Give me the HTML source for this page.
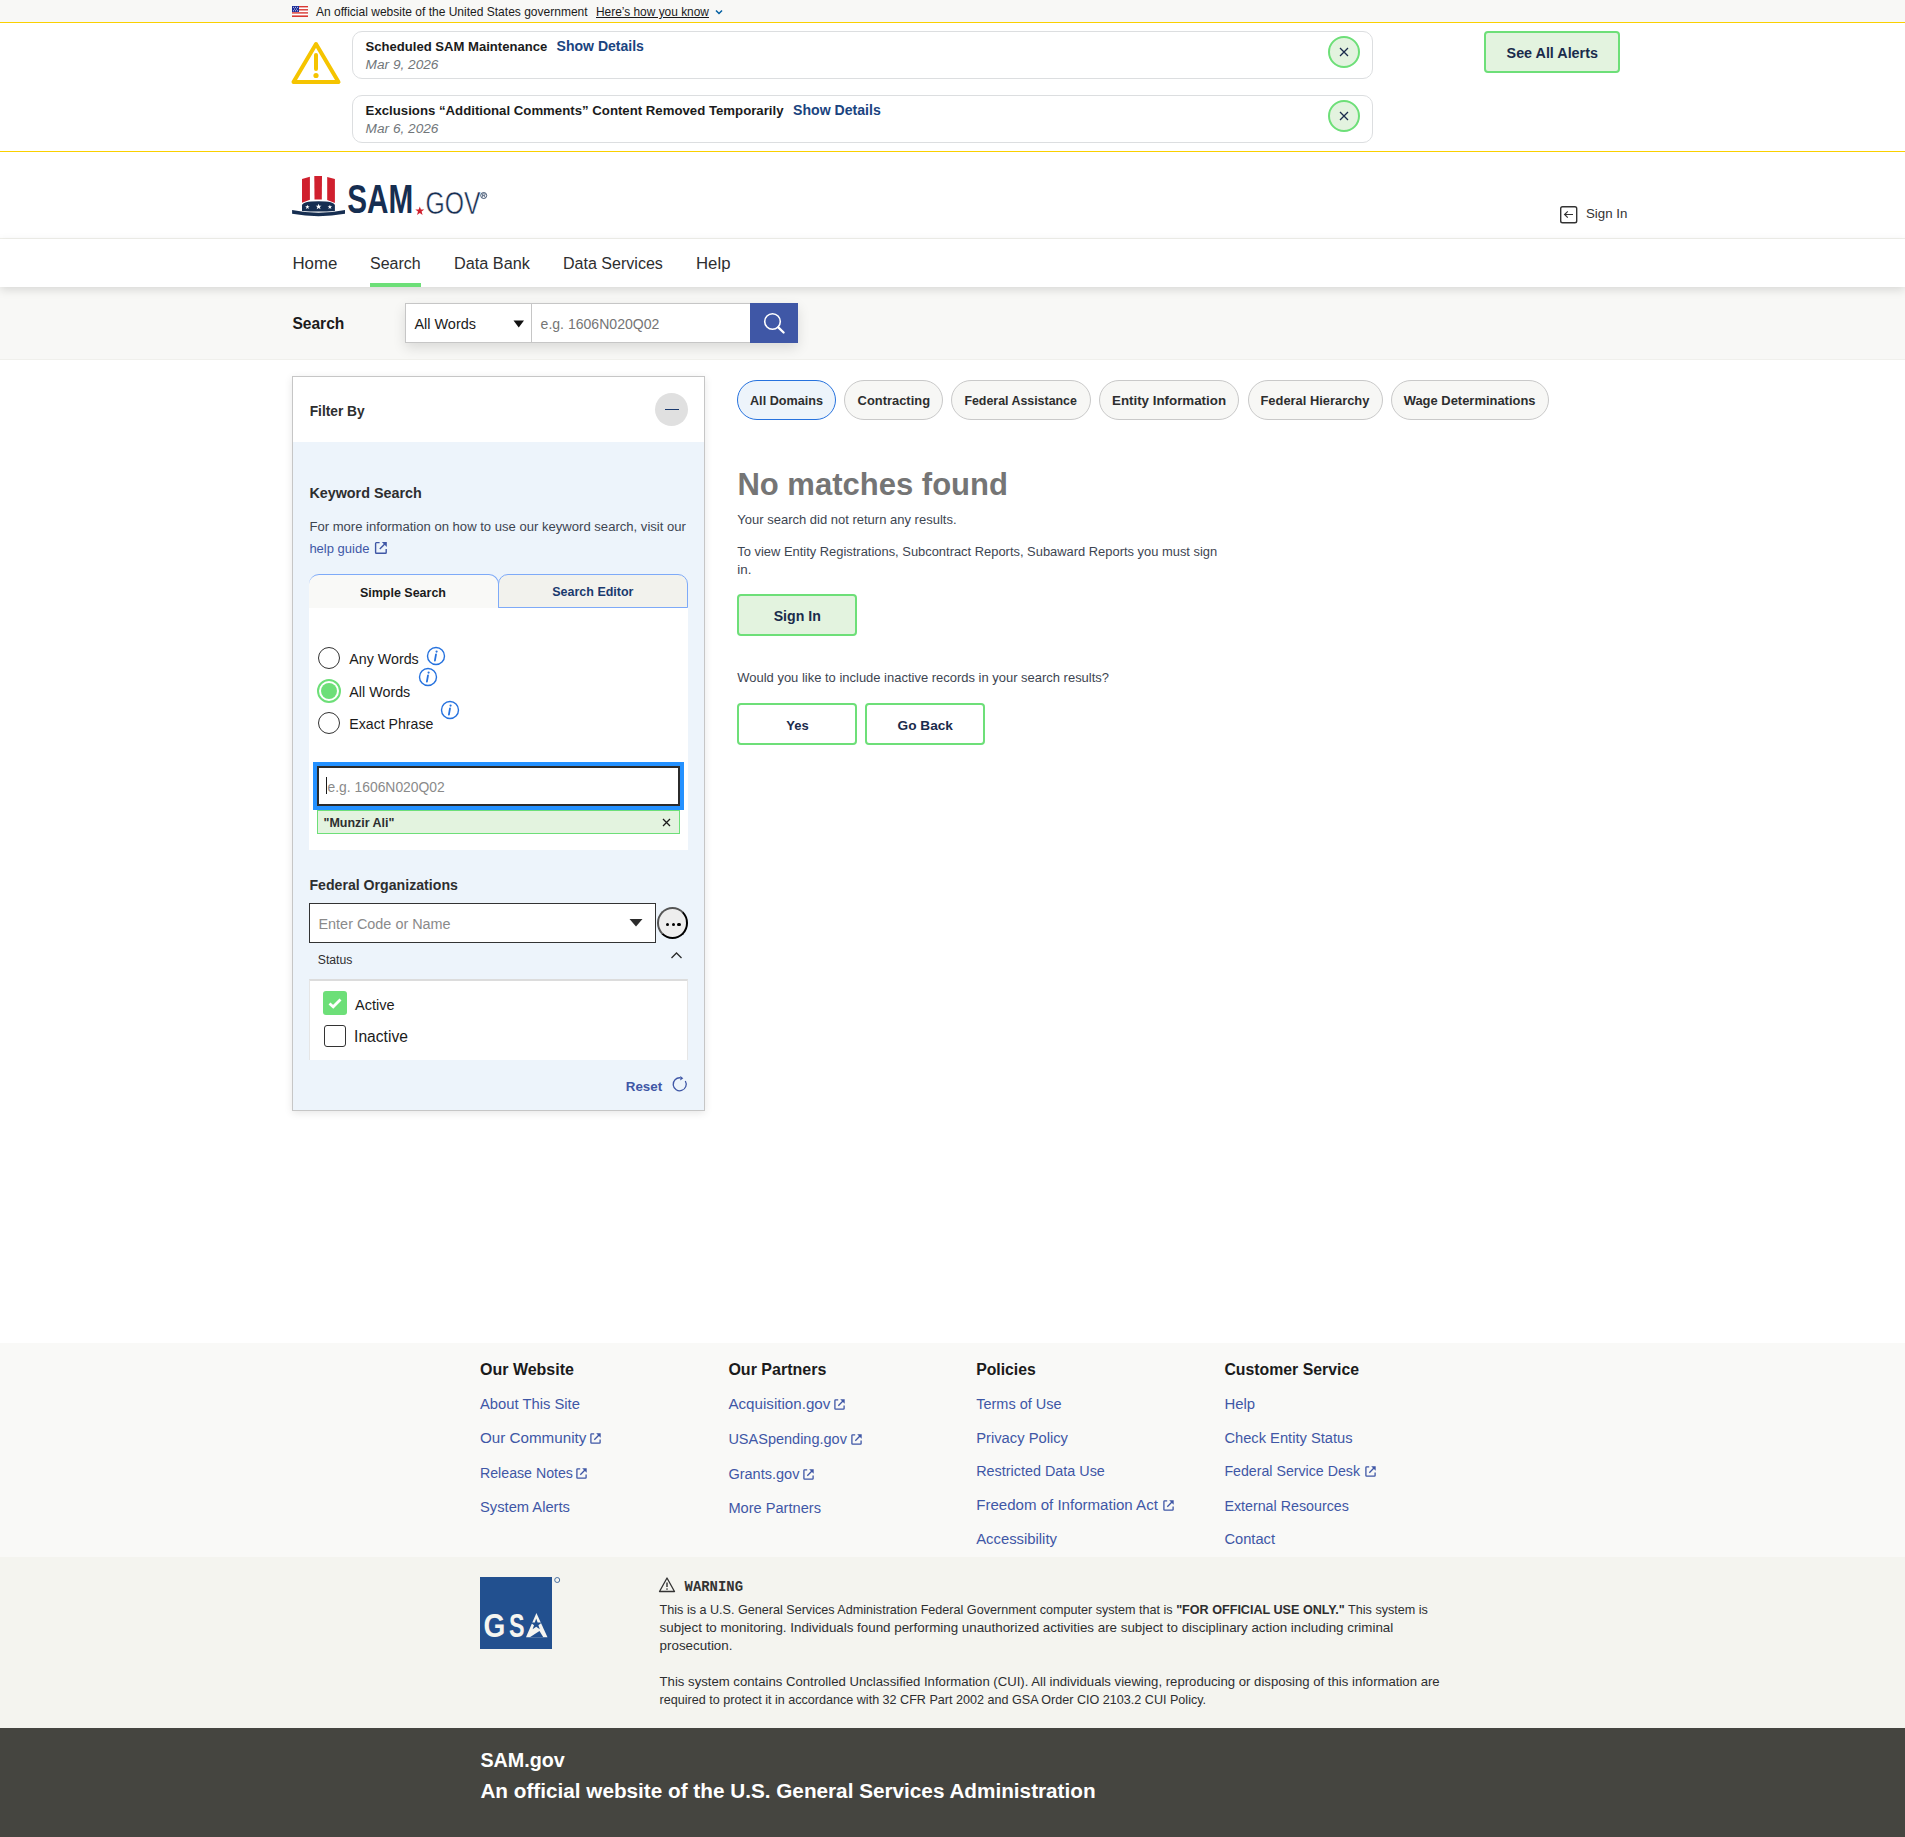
<!DOCTYPE html>
<html><head><meta charset="utf-8"><title>SAM.gov | Search</title>
<style>
html,body{margin:0;padding:0}
body{width:1905px;height:1837px;position:relative;overflow:hidden;background:#fff;font-family:"Liberation Sans",sans-serif;}
.a{position:absolute}
.t{position:absolute;white-space:nowrap;line-height:1}
</style></head><body>
<div class="a" style="left:0px;top:0px;width:1905px;height:22px;background:#f8f8f6"></div>
<div class="a" style="left:0px;top:22px;width:1905px;height:1px;background:#fad000"></div>
<svg class="a" style="left:292px;top:6px" width="16" height="11" viewBox="0 0 16 11">
<rect width="16" height="11" fill="#fff"/>
<g fill="#d83933"><rect y="0" width="16" height="1.4"/><rect y="3.1" width="16" height="1.4"/><rect y="6.2" width="16" height="1.4"/><rect y="9.4" width="16" height="1.6"/></g>
<rect width="7" height="6" fill="#1f2f9a"/>
<g fill="#fff"><circle cx="1.5" cy="1.2" r=".5"/><circle cx="3.5" cy="1.2" r=".5"/><circle cx="5.5" cy="1.2" r=".5"/><circle cx="2.5" cy="3" r=".5"/><circle cx="4.5" cy="3" r=".5"/><circle cx="1.5" cy="4.8" r=".5"/><circle cx="3.5" cy="4.8" r=".5"/><circle cx="5.5" cy="4.8" r=".5"/></g></svg>
<div class="t" style="left:316.00px;top:6.00px;font-size:12.03px;font-weight:normal;font-style:normal;font-family:'Liberation Sans', sans-serif;color:#1b1b1b;">An official website of the United States government</div>
<div class="t" style="left:596.00px;top:7.00px;font-size:11.91px;font-weight:normal;font-style:normal;font-family:'Liberation Sans', sans-serif;color:#1b1b1b;text-decoration:underline;text-underline-offset:1px;">Here’s how you know</div>
<svg class="a" style="left:714px;top:8px" width="10" height="8" viewBox="0 0 10 8"><path d="M2 2.5 L5 5.5 L8 2.5" fill="none" stroke="#005ea2" stroke-width="1.5"/></svg>
<div class="a" style="left:0px;top:151px;width:1905px;height:1px;background:#fad000"></div>
<svg class="a" style="left:290px;top:40px" width="52" height="46" viewBox="0 0 52 46">
<path d="M26 4 L48.5 42 L3.5 42 Z" fill="none" stroke="#f5c400" stroke-width="4" stroke-linejoin="round"/>
<path d="M26 15 L26 29" stroke="#f5c400" stroke-width="4" stroke-linecap="round"/>
<circle cx="26" cy="35.5" r="2.6" fill="#f5c400"/></svg>
<div class="a" style="left:352px;top:31px;width:1021px;height:48px;border:1px solid #dcdee0;border-radius:10px;box-sizing:border-box;background:#fff"></div>
<div class="t" style="left:365.60px;top:40.00px;font-size:13.09px;font-weight:bold;font-style:normal;font-family:'Liberation Sans', sans-serif;color:#1b1b1b;">Scheduled SAM Maintenance</div>
<div class="t" style="left:556.60px;top:39.00px;font-size:14.04px;font-weight:bold;font-style:normal;font-family:'Liberation Sans', sans-serif;color:#1a4480;">Show Details</div>
<div class="t" style="left:365.60px;top:58.00px;font-size:13.67px;font-weight:normal;font-style:italic;font-family:'Liberation Sans', sans-serif;color:#71767a;">Mar 9, 2026</div>
<div class="a" style="left:1328px;top:36px;width:32px;height:32px;border-radius:50%;border:2px solid #6ddf78;background:#e3f3df;box-sizing:border-box"></div>
<svg class="a" style="left:1337px;top:45px" width="14" height="14" viewBox="0 0 14 14"><path d="M3 3 L11 11 M11 3 L3 11" stroke="#1a2b4c" stroke-width="1.3"/></svg>
<div class="a" style="left:352px;top:95px;width:1021px;height:48px;border:1px solid #dcdee0;border-radius:10px;box-sizing:border-box;background:#fff"></div>
<div class="t" style="left:365.60px;top:104.00px;font-size:13.21px;font-weight:bold;font-style:normal;font-family:'Liberation Sans', sans-serif;color:#1b1b1b;">Exclusions “Additional Comments” Content Removed Temporarily</div>
<div class="t" style="left:793.00px;top:103.00px;font-size:14.11px;font-weight:bold;font-style:normal;font-family:'Liberation Sans', sans-serif;color:#1a4480;">Show Details</div>
<div class="t" style="left:365.60px;top:122.00px;font-size:13.67px;font-weight:normal;font-style:italic;font-family:'Liberation Sans', sans-serif;color:#71767a;">Mar 6, 2026</div>
<div class="a" style="left:1328px;top:100px;width:32px;height:32px;border-radius:50%;border:2px solid #6ddf78;background:#e3f3df;box-sizing:border-box"></div>
<svg class="a" style="left:1337px;top:109px" width="14" height="14" viewBox="0 0 14 14"><path d="M3 3 L11 11 M11 3 L3 11" stroke="#1a2b4c" stroke-width="1.3"/></svg>
<div class="a" style="left:1484px;top:31px;width:136px;height:42px;border:2px solid #6ddf78;background:#e3f3df;border-radius:4px;box-sizing:border-box"></div>
<div class="t" style="left:1506.60px;top:46.00px;font-size:14.34px;font-weight:bold;font-style:normal;font-family:'Liberation Sans', sans-serif;color:#1a2b4c;">See All Alerts</div>
<div class="a" style="left:0px;top:238px;width:1905px;height:1px;background:#f1f1ec"></div>
<svg class="a" style="left:290px;top:174px" width="200" height="44" viewBox="0 0 200 44">
<g fill="#d0202e"><path d="M12 5.1 L19.9 2.8 L19.9 25.8 L12 28.8 Z"/><path d="M24.3 2 L32 2 L31.8 25.6 L24.5 25.6 Z"/><path d="M37.2 2.9 L44.9 5.1 L44.9 28.9 L37.2 25.9 Z"/></g>
<path d="M12 36.9 L12 31.5 Q12 27.2 28.5 27.2 Q44.9 27.2 44.9 31.5 L44.9 36.9 Q28.5 38 12 36.9 Z" fill="#162e51"/>
<g fill="#fff"><path d="M17.4 30.7 L18 32.3 L19.7 32.3 L18.3 33.3 L18.9 35 L17.4 33.9 L15.9 35 L16.5 33.3 L15.1 32.3 L16.8 32.3 Z"/><path d="M28.6 29.8 L29.35 31.8 L31.5 31.8 L29.8 33.1 L30.5 35.3 L28.6 33.9 L26.7 35.3 L27.4 33.1 L25.7 31.8 L27.85 31.8 Z"/><path d="M39.9 30.7 L40.5 32.3 L42.2 32.3 L40.8 33.3 L41.4 35 L39.9 33.9 L38.4 35 L39 33.3 L37.6 32.3 L39.3 32.3 Z"/></g>
<path d="M2.1 36 Q28.5 41.5 55 36 L55 39.8 Q28.5 44.5 2.1 39.8 Z" fill="#162e51"/>
<text x="57.3" y="39" font-family="Liberation Sans" font-weight="bold" font-size="40.7" fill="#162e51" textLength="66" lengthAdjust="spacingAndGlyphs">SAM</text>
<path d="M129.8 32.4 L130.9 35.6 L134.3 35.6 L131.6 37.6 L132.6 40.9 L129.8 38.9 L127 40.9 L128 37.6 L125.3 35.6 L128.7 35.6 Z" fill="#d0202e"/>
<text x="135.4" y="39.6" font-family="Liberation Sans" font-size="31.7" fill="#162e51" stroke="#fff" stroke-width="0.5" textLength="55" lengthAdjust="spacingAndGlyphs">GOV</text>
<circle cx="193.7" cy="21.5" r="3" fill="none" stroke="#162e51" stroke-width=".8"/><path d="M192.6 23.3 L192.6 19.8 L194.1 19.8 Q195.1 19.8 195.1 20.7 Q195.1 21.6 194.1 21.6 L192.6 21.6 M194 21.6 L195.1 23.3" fill="none" stroke="#162e51" stroke-width=".6"/>
</svg>
<svg class="a" style="left:1559px;top:205px" width="20" height="20" viewBox="0 0 20 20">
<rect x="1.7" y="1.7" width="16" height="16" rx="1.8" fill="none" stroke="#333" stroke-width="1.4"/>
<path d="M14 9.5 L5.6 9.5 M8.8 6.4 L5.6 9.5 L8.8 12.6" fill="none" stroke="#333" stroke-width="1.2"/></svg>
<div class="t" style="left:1586.00px;top:207.00px;font-size:13.29px;font-weight:normal;font-style:normal;font-family:'Liberation Sans', sans-serif;color:#333;">Sign In</div>
<div class="a" style="left:0px;top:287px;width:1905px;height:73px;background:#f8f8f6;border-bottom:1px solid #f0f0ec;box-sizing:border-box"></div>
<div class="a" style="left:0px;top:239px;width:1905px;height:48px;background:#fff;box-shadow:0 3px 9px rgba(0,0,0,.13)"></div>
<div class="t" style="left:292.40px;top:256.00px;font-size:16.85px;font-weight:normal;font-style:normal;font-family:'Liberation Sans', sans-serif;color:#2d2e2f;">Home</div>
<div class="t" style="left:370.00px;top:256.00px;font-size:15.97px;font-weight:normal;font-style:normal;font-family:'Liberation Sans', sans-serif;color:#2d2e2f;">Search</div>
<div class="t" style="left:454.00px;top:255.00px;font-size:16.26px;font-weight:normal;font-style:normal;font-family:'Liberation Sans', sans-serif;color:#2d2e2f;">Data Bank</div>
<div class="t" style="left:563.00px;top:255.00px;font-size:16.06px;font-weight:normal;font-style:normal;font-family:'Liberation Sans', sans-serif;color:#2d2e2f;">Data Services</div>
<div class="t" style="left:696.00px;top:256.00px;font-size:16.75px;font-weight:normal;font-style:normal;font-family:'Liberation Sans', sans-serif;color:#2d2e2f;">Help</div>
<div class="a" style="left:370px;top:283px;width:51px;height:4px;background:#6ddf78"></div>
<div class="t" style="left:292.40px;top:316.00px;font-size:15.59px;font-weight:bold;font-style:normal;font-family:'Liberation Sans', sans-serif;color:#1b1b1b;">Search</div>
<div class="a" style="left:405px;top:303px;width:393px;height:40px;box-shadow:0 5px 12px rgba(0,0,0,.12)"></div>
<div class="a" style="left:405px;top:303px;width:127px;height:40px;background:#fff;border:1px solid #c6c6c6;box-sizing:border-box"></div>
<div class="t" style="left:414.40px;top:317.00px;font-size:14.46px;font-weight:normal;font-style:normal;font-family:'Liberation Sans', sans-serif;color:#1b1b1b;">All Words</div>
<svg class="a" style="left:513px;top:320px" width="12" height="8" viewBox="0 0 12 8"><path d="M0.5 0.5 L11 0.5 L5.75 7.5 Z" fill="#111"/></svg>
<div class="a" style="left:531px;top:303px;width:220px;height:40px;background:#fff;border:1px solid #c6c6c6;box-sizing:border-box"></div>
<div class="t" style="left:540.60px;top:317.00px;font-size:14.06px;font-weight:normal;font-style:normal;font-family:'Liberation Sans', sans-serif;color:#757575;">e.g. 1606N020Q02</div>
<div class="a" style="left:750px;top:303px;width:48px;height:40px;background:#3f57a6"></div>
<svg class="a" style="left:762px;top:311px" width="26" height="26" viewBox="0 0 26 26"><circle cx="10.5" cy="10.5" r="7.8" fill="none" stroke="#fff" stroke-width="1.6"/><path d="M16.3 16.4 L21.6 21.5" stroke="#fff" stroke-width="2.3" stroke-linecap="round"/></svg>
<div class="a" style="left:292px;top:376px;width:413px;height:735px;border:1px solid #c6c6c6;box-sizing:border-box;background:#edf4fb;box-shadow:0 2px 8px rgba(0,0,0,.10)"></div>
<div class="a" style="left:293px;top:377px;width:411px;height:65px;background:#fff"></div>
<div class="t" style="left:309.70px;top:405.00px;font-size:13.75px;font-weight:bold;font-style:normal;font-family:'Liberation Sans', sans-serif;color:#2d2e2f;">Filter By</div>
<div class="a" style="left:655px;top:393px;width:33px;height:33px;background:#e0e0e0;border-radius:50%"></div>
<div class="a" style="left:665px;top:408.7px;width:14px;height:1.7px;background:#1a3a6e"></div>
<div class="t" style="left:309.40px;top:486.00px;font-size:14.35px;font-weight:bold;font-style:normal;font-family:'Liberation Sans', sans-serif;color:#2d2e2f;">Keyword Search</div>
<div class="t" style="left:309.40px;top:520.00px;font-size:13.09px;font-weight:normal;font-style:normal;font-family:'Liberation Sans', sans-serif;color:#3d4551;">For more information on how to use our keyword search, visit our</div>
<div class="t" style="left:309.40px;top:542.00px;font-size:13.00px;font-weight:normal;font-style:normal;font-family:'Liberation Sans', sans-serif;color:#3f57a6;">help guide</div>
<svg class="a" style="left:374px;top:541px" width="14" height="14" viewBox="0 0 14 14"><path d="M5.6 1.6 L2.4 1.6 Q1.6 1.6 1.6 2.4 L1.6 11.4 Q1.6 12.2 2.4 12.2 L11.4 12.2 Q12.2 12.2 12.2 11.4 L12.2 8" fill="none" stroke="#3f57a6" stroke-width="1.4"/><path d="M5.8 8 L11.2 2.6" fill="none" stroke="#3f57a6" stroke-width="1.4"/><path d="M7.8 1 L12.8 1 L12.8 6 Z" fill="#3f57a6"/></svg>
<div class="a" style="left:309px;top:574px;width:190px;height:34px;background:#f9f9f7;border-top:1px solid #7eaaf8;border-right:1px solid #7eaaf8;border-radius:10px 10px 0 0;box-sizing:border-box"></div>
<div class="a" style="left:498px;top:574px;width:190px;height:34px;background:#f2f2ed;border:1px solid #7eaaf8;border-radius:10px 10px 0 0;box-sizing:border-box"></div>
<div class="t" style="left:360.00px;top:587.00px;font-size:12.48px;font-weight:bold;font-style:normal;font-family:'Liberation Sans', sans-serif;color:#1b1b1b;">Simple Search</div>
<div class="t" style="left:552.30px;top:586.00px;font-size:12.49px;font-weight:bold;font-style:normal;font-family:'Liberation Sans', sans-serif;color:#1a3a6e;">Search Editor</div>
<div class="a" style="left:309px;top:608px;width:379px;height:242px;background:#fff"></div>
<div class="a" style="left:318px;top:647px;width:22px;height:22px;border-radius:50%;border:1.5px solid #333;box-sizing:border-box;background:#fff"></div>
<div class="t" style="left:349.30px;top:652.00px;font-size:14.25px;font-weight:normal;font-style:normal;font-family:'Liberation Sans', sans-serif;color:#1b1b1b;">Any Words</div>
<div class="a" style="left:317px;top:679px;width:24px;height:24px;border-radius:50%;border:2.5px solid #6ddf78;box-sizing:border-box;background:#fff"></div>
<div class="a" style="left:321px;top:683px;width:16px;height:16px;border-radius:50%;background:#6ddf78"></div>
<div class="t" style="left:349.30px;top:685.00px;font-size:14.32px;font-weight:normal;font-style:normal;font-family:'Liberation Sans', sans-serif;color:#1b1b1b;">All Words</div>
<div class="a" style="left:318px;top:712px;width:22px;height:22px;border-radius:50%;border:1.5px solid #333;box-sizing:border-box;background:#fff"></div>
<div class="t" style="left:349.30px;top:717.00px;font-size:14.13px;font-weight:normal;font-style:normal;font-family:'Liberation Sans', sans-serif;color:#1b1b1b;">Exact Phrase</div>
<svg class="a" style="left:426.2px;top:646px" width="20" height="20" viewBox="0 0 20 20"><circle cx="10" cy="10" r="8.5" fill="none" stroke="#2672de" stroke-width="1.4"/><circle cx="10.6" cy="5.6" r="1.1" fill="#2672de"/><path d="M10 8.3 L8.9 14.6" stroke="#2672de" stroke-width="1.8" stroke-linecap="round"/></svg>
<svg class="a" style="left:418px;top:667px" width="20" height="20" viewBox="0 0 20 20"><circle cx="10" cy="10" r="8.5" fill="none" stroke="#2672de" stroke-width="1.4"/><circle cx="10.6" cy="5.6" r="1.1" fill="#2672de"/><path d="M10 8.3 L8.9 14.6" stroke="#2672de" stroke-width="1.8" stroke-linecap="round"/></svg>
<svg class="a" style="left:440px;top:700px" width="20" height="20" viewBox="0 0 20 20"><circle cx="10" cy="10" r="8.5" fill="none" stroke="#2672de" stroke-width="1.4"/><circle cx="10.6" cy="5.6" r="1.1" fill="#2672de"/><path d="M10 8.3 L8.9 14.6" stroke="#2672de" stroke-width="1.8" stroke-linecap="round"/></svg>
<div class="a" style="left:313px;top:762px;width:371px;height:48px;background:#2491ff"></div>
<div class="a" style="left:317px;top:766px;width:363px;height:40px;background:#fff;border:2px solid #2b2b2b;box-sizing:border-box"></div>
<div class="a" style="left:326px;top:777px;width:1px;height:17px;background:#1b1b1b"></div>
<div class="t" style="left:327.50px;top:781.00px;font-size:13.89px;font-weight:normal;font-style:normal;font-family:'Liberation Sans', sans-serif;color:#8a8a8a;">e.g. 1606N020Q02</div>
<div class="a" style="left:317px;top:810px;width:363px;height:24px;background:#e3f3df;border:1px solid #6ddf78;box-sizing:border-box"></div>
<div class="t" style="left:323.50px;top:817.00px;font-size:12.48px;font-weight:bold;font-style:normal;font-family:'Liberation Sans', sans-serif;color:#2d2e2f;">&quot;Munzir Ali&quot;</div>
<svg class="a" style="left:661px;top:817px" width="11" height="11" viewBox="0 0 11 11"><path d="M2 2 L9 9 M9 2 L2 9" stroke="#1b1b1b" stroke-width="1.3"/></svg>
<div class="t" style="left:309.40px;top:878.00px;font-size:14.15px;font-weight:bold;font-style:normal;font-family:'Liberation Sans', sans-serif;color:#2d2e2f;">Federal Organizations</div>
<div class="a" style="left:309px;top:903px;width:347px;height:40px;background:#fff;border:1px solid #333;box-sizing:border-box"></div>
<div class="t" style="left:318.50px;top:917.00px;font-size:14.42px;font-weight:normal;font-style:normal;font-family:'Liberation Sans', sans-serif;color:#8a8a8a;">Enter Code or Name</div>
<svg class="a" style="left:629px;top:918px" width="14" height="10" viewBox="0 0 14 10"><path d="M0.5 1 L13.5 1 L7 8.5 Z" fill="#2b2b2b"/></svg>
<div class="a" style="left:657px;top:907px;width:31px;height:32px;background:#eeeeee;border:2px solid #000;border-color:#555 #000 #000 #555;border-radius:50%;box-sizing:border-box"></div>
<div class="a" style="left:665.75px;top:922.5px;width:3.5px;height:3.5px;background:#000;border-radius:50%"></div>
<div class="a" style="left:671.55px;top:922.5px;width:3.5px;height:3.5px;background:#000;border-radius:50%"></div>
<div class="a" style="left:677.35px;top:922.5px;width:3.5px;height:3.5px;background:#000;border-radius:50%"></div>
<div class="t" style="left:317.80px;top:954.00px;font-size:12.21px;font-weight:normal;font-style:normal;font-family:'Liberation Sans', sans-serif;color:#2d2e2f;">Status</div>
<svg class="a" style="left:670px;top:950px" width="13" height="10" viewBox="0 0 13 10"><path d="M1.5 8 L6.5 3 L11.5 8" fill="none" stroke="#2b2b2b" stroke-width="1.3"/></svg>
<div class="a" style="left:309px;top:979px;width:379px;height:81px;background:#fff;border-top:2px solid #dcdcdc;border-left:1px solid #e6e6e6;border-right:1px solid #e6e6e6;box-sizing:border-box"></div>
<div class="a" style="left:323px;top:991px;width:24px;height:24px;background:#6ddf78;border-radius:3px"></div>
<svg class="a" style="left:323px;top:991px" width="24" height="24" viewBox="0 0 24 24"><path d="M6.5 12.5 L10.2 15.8 L17.5 8.5" fill="none" stroke="#fff" stroke-width="2.8"/></svg>
<div class="t" style="left:355.10px;top:998.00px;font-size:14.54px;font-weight:normal;font-style:normal;font-family:'Liberation Sans', sans-serif;color:#1b1b1b;">Active</div>
<div class="a" style="left:324px;top:1025px;width:22px;height:22px;background:#fff;border:1.5px solid #333;border-radius:3px;box-sizing:border-box"></div>
<div class="t" style="left:354.07px;top:1029.00px;font-size:15.63px;font-weight:normal;font-style:normal;font-family:'Liberation Sans', sans-serif;color:#1b1b1b;">Inactive</div>
<div class="t" style="left:625.80px;top:1080.00px;font-size:13.36px;font-weight:bold;font-style:normal;font-family:'Liberation Sans', sans-serif;color:#3f57a6;">Reset</div>
<svg class="a" style="left:670px;top:1075px" width="18" height="18" viewBox="0 0 18 18"><path d="M15.33 6.05 A6.5 6.5 0 1 1 10.3 2.8" fill="none" stroke="#3f57a6" stroke-width="1.3"/><path d="M10.3 1.1 L13.3 3.3 L10.3 5.5 Z" fill="#3f57a6"/></svg>
<div class="a" style="left:737px;top:380px;width:99px;height:40px;background:#edf4fb;border:1.5px solid #2672de;border-radius:20px;box-sizing:border-box"></div>
<div class="t" style="left:750.00px;top:395.00px;font-size:12.63px;font-weight:bold;font-style:normal;font-family:'Liberation Sans', sans-serif;color:#2d2e2f;">All Domains</div>
<div class="a" style="left:844px;top:380px;width:99px;height:40px;background:#f7f7f5;border:1px solid #c9c9c9;border-radius:20px;box-sizing:border-box"></div>
<div class="t" style="left:857.60px;top:395.00px;font-size:12.91px;font-weight:bold;font-style:normal;font-family:'Liberation Sans', sans-serif;color:#2d2e2f;">Contracting</div>
<div class="a" style="left:951px;top:380px;width:140px;height:40px;background:#f7f7f5;border:1px solid #c9c9c9;border-radius:20px;box-sizing:border-box"></div>
<div class="t" style="left:964.40px;top:395.00px;font-size:12.40px;font-weight:bold;font-style:normal;font-family:'Liberation Sans', sans-serif;color:#2d2e2f;">Federal Assistance</div>
<div class="a" style="left:1099px;top:380px;width:140px;height:40px;background:#f7f7f5;border:1px solid #c9c9c9;border-radius:20px;box-sizing:border-box"></div>
<div class="t" style="left:1112.00px;top:394.00px;font-size:13.33px;font-weight:bold;font-style:normal;font-family:'Liberation Sans', sans-serif;color:#2d2e2f;">Entity Information</div>
<div class="a" style="left:1247.5px;top:380px;width:135px;height:40px;background:#f7f7f5;border:1px solid #c9c9c9;border-radius:20px;box-sizing:border-box"></div>
<div class="t" style="left:1260.50px;top:395.00px;font-size:12.90px;font-weight:bold;font-style:normal;font-family:'Liberation Sans', sans-serif;color:#2d2e2f;">Federal Hierarchy</div>
<div class="a" style="left:1391px;top:380px;width:158px;height:40px;background:#f7f7f5;border:1px solid #c9c9c9;border-radius:20px;box-sizing:border-box"></div>
<div class="t" style="left:1403.70px;top:395.00px;font-size:12.94px;font-weight:bold;font-style:normal;font-family:'Liberation Sans', sans-serif;color:#2d2e2f;">Wage Determinations</div>
<div class="t" style="left:737.39px;top:469.00px;font-size:31.02px;font-weight:bold;font-style:normal;font-family:'Liberation Sans', sans-serif;color:#757575;">No matches found</div>
<div class="t" style="left:737.30px;top:513.00px;font-size:13.01px;font-weight:normal;font-style:normal;font-family:'Liberation Sans', sans-serif;color:#3d4551;">Your search did not return any results.</div>
<div class="t" style="left:737.30px;top:546.00px;font-size:12.92px;font-weight:normal;font-style:normal;font-family:'Liberation Sans', sans-serif;color:#3d4551;">To view Entity Registrations, Subcontract Reports, Subaward Reports you must sign</div>
<div class="t" style="left:737.30px;top:563.00px;font-size:13.39px;font-weight:normal;font-style:normal;font-family:'Liberation Sans', sans-serif;color:#3d4551;">in.</div>
<div class="a" style="left:737px;top:594px;width:120px;height:42px;background:#e3f3df;border:2px solid #6ddf78;border-radius:4px;box-sizing:border-box"></div>
<div class="t" style="left:773.70px;top:609.00px;font-size:14.15px;font-weight:bold;font-style:normal;font-family:'Liberation Sans', sans-serif;color:#1a2b4c;">Sign In</div>
<div class="t" style="left:737.30px;top:672.00px;font-size:12.97px;font-weight:normal;font-style:normal;font-family:'Liberation Sans', sans-serif;color:#3d4551;">Would you like to include inactive records in your search results?</div>
<div class="a" style="left:737px;top:703px;width:120px;height:42px;background:#fff;border:2px solid #6ddf78;border-radius:4px;box-sizing:border-box"></div>
<div class="t" style="left:786.30px;top:719.00px;font-size:13.00px;font-weight:bold;font-style:normal;font-family:'Liberation Sans', sans-serif;color:#1a2b4c;">Yes</div>
<div class="a" style="left:865px;top:703px;width:120px;height:42px;background:#fff;border:2px solid #6ddf78;border-radius:4px;box-sizing:border-box"></div>
<div class="t" style="left:897.60px;top:719.00px;font-size:13.65px;font-weight:bold;font-style:normal;font-family:'Liberation Sans', sans-serif;color:#1a2b4c;">Go Back</div>
<div class="a" style="left:0px;top:1343px;width:1905px;height:214px;background:#f9f9f7"></div>
<div class="t" style="left:480.00px;top:1362.00px;font-size:16.01px;font-weight:bold;font-style:normal;font-family:'Liberation Sans', sans-serif;color:#1b1b1b;">Our Website</div>
<div class="t" style="left:480.00px;top:1397.00px;font-size:14.78px;font-weight:normal;font-style:normal;font-family:'Liberation Sans', sans-serif;color:#3f57a6;">About This Site</div>
<div class="t" style="left:480.00px;top:1430.00px;font-size:15.20px;font-weight:normal;font-style:normal;font-family:'Liberation Sans', sans-serif;color:#3f57a6;">Our Community</div>
<svg class="a" style="left:589px;top:1432px" width="13" height="13" viewBox="0 0 13 13"><path d="M5.2 1.9 L2.6 1.9 Q1.9 1.9 1.9 2.6 L1.9 10.4 Q1.9 11.1 2.6 11.1 L10.4 11.1 Q11.1 11.1 11.1 10.4 L11.1 7.4" fill="none" stroke="#3f57a6" stroke-width="1.3"/><path d="M5.3 7.7 L10.2 2.8" fill="none" stroke="#3f57a6" stroke-width="1.3"/><path d="M7.2 1.3 L11.7 1.3 L11.7 5.8 Z" fill="#3f57a6"/></svg>
<div class="t" style="left:480.00px;top:1466.00px;font-size:14.18px;font-weight:normal;font-style:normal;font-family:'Liberation Sans', sans-serif;color:#3f57a6;">Release Notes</div>
<svg class="a" style="left:575px;top:1467px" width="13" height="13" viewBox="0 0 13 13"><path d="M5.2 1.9 L2.6 1.9 Q1.9 1.9 1.9 2.6 L1.9 10.4 Q1.9 11.1 2.6 11.1 L10.4 11.1 Q11.1 11.1 11.1 10.4 L11.1 7.4" fill="none" stroke="#3f57a6" stroke-width="1.3"/><path d="M5.3 7.7 L10.2 2.8" fill="none" stroke="#3f57a6" stroke-width="1.3"/><path d="M7.2 1.3 L11.7 1.3 L11.7 5.8 Z" fill="#3f57a6"/></svg>
<div class="t" style="left:480.00px;top:1500.00px;font-size:14.72px;font-weight:normal;font-style:normal;font-family:'Liberation Sans', sans-serif;color:#3f57a6;">System Alerts</div>
<div class="t" style="left:728.40px;top:1361.00px;font-size:16.03px;font-weight:bold;font-style:normal;font-family:'Liberation Sans', sans-serif;color:#1b1b1b;">Our Partners</div>
<div class="t" style="left:728.40px;top:1396.00px;font-size:15.17px;font-weight:normal;font-style:normal;font-family:'Liberation Sans', sans-serif;color:#3f57a6;">Acquisition.gov</div>
<svg class="a" style="left:833px;top:1398px" width="13" height="13" viewBox="0 0 13 13"><path d="M5.2 1.9 L2.6 1.9 Q1.9 1.9 1.9 2.6 L1.9 10.4 Q1.9 11.1 2.6 11.1 L10.4 11.1 Q11.1 11.1 11.1 10.4 L11.1 7.4" fill="none" stroke="#3f57a6" stroke-width="1.3"/><path d="M5.3 7.7 L10.2 2.8" fill="none" stroke="#3f57a6" stroke-width="1.3"/><path d="M7.2 1.3 L11.7 1.3 L11.7 5.8 Z" fill="#3f57a6"/></svg>
<div class="t" style="left:728.40px;top:1432.00px;font-size:14.51px;font-weight:normal;font-style:normal;font-family:'Liberation Sans', sans-serif;color:#3f57a6;">USASpending.gov</div>
<svg class="a" style="left:850px;top:1433px" width="13" height="13" viewBox="0 0 13 13"><path d="M5.2 1.9 L2.6 1.9 Q1.9 1.9 1.9 2.6 L1.9 10.4 Q1.9 11.1 2.6 11.1 L10.4 11.1 Q11.1 11.1 11.1 10.4 L11.1 7.4" fill="none" stroke="#3f57a6" stroke-width="1.3"/><path d="M5.3 7.7 L10.2 2.8" fill="none" stroke="#3f57a6" stroke-width="1.3"/><path d="M7.2 1.3 L11.7 1.3 L11.7 5.8 Z" fill="#3f57a6"/></svg>
<div class="t" style="left:728.40px;top:1467.00px;font-size:14.52px;font-weight:normal;font-style:normal;font-family:'Liberation Sans', sans-serif;color:#3f57a6;">Grants.gov</div>
<svg class="a" style="left:802px;top:1468px" width="13" height="13" viewBox="0 0 13 13"><path d="M5.2 1.9 L2.6 1.9 Q1.9 1.9 1.9 2.6 L1.9 10.4 Q1.9 11.1 2.6 11.1 L10.4 11.1 Q11.1 11.1 11.1 10.4 L11.1 7.4" fill="none" stroke="#3f57a6" stroke-width="1.3"/><path d="M5.3 7.7 L10.2 2.8" fill="none" stroke="#3f57a6" stroke-width="1.3"/><path d="M7.2 1.3 L11.7 1.3 L11.7 5.8 Z" fill="#3f57a6"/></svg>
<div class="t" style="left:728.40px;top:1501.00px;font-size:14.62px;font-weight:normal;font-style:normal;font-family:'Liberation Sans', sans-serif;color:#3f57a6;">More Partners</div>
<div class="t" style="left:976.20px;top:1362.00px;font-size:15.77px;font-weight:bold;font-style:normal;font-family:'Liberation Sans', sans-serif;color:#1b1b1b;">Policies</div>
<div class="t" style="left:976.20px;top:1397.00px;font-size:14.50px;font-weight:normal;font-style:normal;font-family:'Liberation Sans', sans-serif;color:#3f57a6;">Terms of Use</div>
<div class="t" style="left:976.20px;top:1431.00px;font-size:14.75px;font-weight:normal;font-style:normal;font-family:'Liberation Sans', sans-serif;color:#3f57a6;">Privacy Policy</div>
<div class="t" style="left:976.20px;top:1464.00px;font-size:14.39px;font-weight:normal;font-style:normal;font-family:'Liberation Sans', sans-serif;color:#3f57a6;">Restricted Data Use</div>
<div class="t" style="left:976.20px;top:1497.00px;font-size:15.07px;font-weight:normal;font-style:normal;font-family:'Liberation Sans', sans-serif;color:#3f57a6;">Freedom of Information Act</div>
<svg class="a" style="left:1162px;top:1499px" width="13" height="13" viewBox="0 0 13 13"><path d="M5.2 1.9 L2.6 1.9 Q1.9 1.9 1.9 2.6 L1.9 10.4 Q1.9 11.1 2.6 11.1 L10.4 11.1 Q11.1 11.1 11.1 10.4 L11.1 7.4" fill="none" stroke="#3f57a6" stroke-width="1.3"/><path d="M5.3 7.7 L10.2 2.8" fill="none" stroke="#3f57a6" stroke-width="1.3"/><path d="M7.2 1.3 L11.7 1.3 L11.7 5.8 Z" fill="#3f57a6"/></svg>
<div class="t" style="left:976.20px;top:1532.00px;font-size:14.84px;font-weight:normal;font-style:normal;font-family:'Liberation Sans', sans-serif;color:#3f57a6;">Accessibility</div>
<div class="t" style="left:1224.40px;top:1362.00px;font-size:15.83px;font-weight:bold;font-style:normal;font-family:'Liberation Sans', sans-serif;color:#1b1b1b;">Customer Service</div>
<div class="t" style="left:1224.40px;top:1397.00px;font-size:14.90px;font-weight:normal;font-style:normal;font-family:'Liberation Sans', sans-serif;color:#3f57a6;">Help</div>
<div class="t" style="left:1224.40px;top:1431.00px;font-size:14.69px;font-weight:normal;font-style:normal;font-family:'Liberation Sans', sans-serif;color:#3f57a6;">Check Entity Status</div>
<div class="t" style="left:1224.40px;top:1464.00px;font-size:14.20px;font-weight:normal;font-style:normal;font-family:'Liberation Sans', sans-serif;color:#3f57a6;">Federal Service Desk</div>
<svg class="a" style="left:1364px;top:1465px" width="13" height="13" viewBox="0 0 13 13"><path d="M5.2 1.9 L2.6 1.9 Q1.9 1.9 1.9 2.6 L1.9 10.4 Q1.9 11.1 2.6 11.1 L10.4 11.1 Q11.1 11.1 11.1 10.4 L11.1 7.4" fill="none" stroke="#3f57a6" stroke-width="1.3"/><path d="M5.3 7.7 L10.2 2.8" fill="none" stroke="#3f57a6" stroke-width="1.3"/><path d="M7.2 1.3 L11.7 1.3 L11.7 5.8 Z" fill="#3f57a6"/></svg>
<div class="t" style="left:1224.40px;top:1499.00px;font-size:14.28px;font-weight:normal;font-style:normal;font-family:'Liberation Sans', sans-serif;color:#3f57a6;">External Resources</div>
<div class="t" style="left:1224.40px;top:1532.00px;font-size:14.69px;font-weight:normal;font-style:normal;font-family:'Liberation Sans', sans-serif;color:#3f57a6;">Contact</div>
<div class="a" style="left:0px;top:1557px;width:1905px;height:171px;background:#f4f4ef"></div>
<svg class="a" style="left:480px;top:1577px" width="82" height="72" viewBox="0 0 82 72">
<rect x="0" y="0" width="72" height="72" fill="#22508f"/>
<text x="3.6" y="60.2" font-family="Liberation Sans" font-weight="bold" font-size="33.5" fill="#f5f5f0" textLength="21.8" lengthAdjust="spacingAndGlyphs">G</text>
<text x="28.9" y="60.2" font-family="Liberation Sans" font-weight="bold" font-size="33.5" fill="#f5f5f0" textLength="15.6" lengthAdjust="spacingAndGlyphs">S</text>
<path d="M46 60.2 L56.4 36.1 L67.5 60.2 Z" fill="#f5f5f0"/>
<path d="M49.8 60.3 L59.5 54 L63.3 60.3 Z" fill="#22508f"/>
<path d="M56.2 41.5 L57.6 45.6 L61.9 45.6 L58.4 48.2 L59.8 52.3 L56.2 49.8 L52.6 52.3 L54 48.2 L50.5 45.6 L54.8 45.6 Z" fill="#22508f"/>
<circle cx="77.2" cy="3" r="2.5" fill="none" stroke="#22508f" stroke-width=".8"/>
</svg>
<svg class="a" style="left:658px;top:1576px" width="18" height="17" viewBox="0 0 18 17"><path d="M9 2 L16.5 15.5 L1.5 15.5 Z" fill="none" stroke="#333" stroke-width="1.3" stroke-linejoin="round"/><path d="M9 6.5 L9 11" stroke="#333" stroke-width="1.4"/><circle cx="9" cy="13.1" r=".8" fill="#333"/></svg>
<div class="t" style="left:684.59px;top:1581.00px;font-size:13.91px;font-weight:bold;font-style:normal;font-family:'Liberation Mono', monospace;color:#333;">WARNING</div>
<div class="t" style="left:659.6px;top:1604px;font-size:12.6px;color:#2d2e2f">This is a U.S. General Services Administration Federal Government computer system that is <b>"FOR OFFICIAL USE ONLY."</b> This system is</div>
<div class="t" style="left:659.60px;top:1621.00px;font-size:13.37px;font-weight:normal;font-style:normal;font-family:'Liberation Sans', sans-serif;color:#2d2e2f;">subject to monitoring. Individuals found performing unauthorized activities are subject to disciplinary action including criminal</div>
<div class="t" style="left:659.60px;top:1639.00px;font-size:13.38px;font-weight:normal;font-style:normal;font-family:'Liberation Sans', sans-serif;color:#2d2e2f;">prosecution.</div>
<div class="t" style="left:659.60px;top:1675.00px;font-size:13.15px;font-weight:normal;font-style:normal;font-family:'Liberation Sans', sans-serif;color:#2d2e2f;">This system contains Controlled Unclassified Information (CUI). All individuals viewing, reproducing or disposing of this information are</div>
<div class="t" style="left:659.60px;top:1694.00px;font-size:12.59px;font-weight:normal;font-style:normal;font-family:'Liberation Sans', sans-serif;color:#2d2e2f;">required to protect it in accordance with 32 CFR Part 2002 and GSA Order CIO 2103.2 CUI Policy.</div>
<div class="a" style="left:0px;top:1728px;width:1905px;height:109px;background:#454540"></div>
<div class="t" style="left:480.40px;top:1751.00px;font-size:19.72px;font-weight:bold;font-style:normal;font-family:'Liberation Sans', sans-serif;color:#fff;">SAM.gov</div>
<div class="t" style="left:480.40px;top:1781.00px;font-size:20.73px;font-weight:bold;font-style:normal;font-family:'Liberation Sans', sans-serif;color:#fff;">An official website of the U.S. General Services Administration</div>
</body></html>
